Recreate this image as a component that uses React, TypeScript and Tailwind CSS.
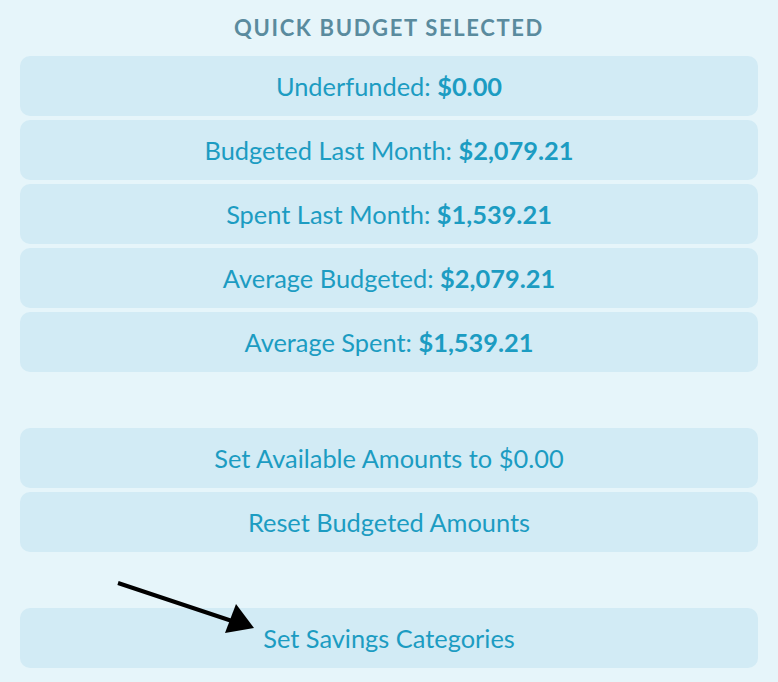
import React from "react";

const stats = [
  { label: "Underfunded:", value: "$0.00" },
  { label: "Budgeted Last Month:", value: "$2,079.21" },
  { label: "Spent Last Month:", value: "$1,539.21" },
  { label: "Average Budgeted:", value: "$2,079.21" },
  { label: "Average Spent:", value: "$1,539.21" },
];

function Row({ children }: { children: React.ReactNode }) {
  return (
    <button
      type="button"
      className="flex h-[60px] w-full items-center justify-center rounded-[10px] bg-[#d2ebf5] text-[25.4px] text-[#1c9cc2]"
    >
      {children}
    </button>
  );
}

export default function App() {
  return (
    <div
      className="relative min-h-[682px] w-full bg-[#e6f5fa] px-5"
      style={{ fontFamily: "Lato, 'Open Sans', sans-serif" }}
    >
      <h2 className="flex h-[55px] items-center justify-center text-[22px] font-bold uppercase tracking-[0.075em] text-[#5a8b9e]">
        Quick Budget Selected
      </h2>
      <div className="mt-px flex flex-col gap-1">
        {stats.map((s) => (
          <Row key={s.label}>
            {s.label}&nbsp;<span className="font-bold">{s.value}</span>
          </Row>
        ))}
      </div>
      <div className="mt-14 flex flex-col gap-1">
        <Row>Set Available Amounts to $0.00</Row>
        <Row>Reset Budgeted Amounts</Row>
      </div>
      <div className="mt-14">
        <Row>Set Savings Categories</Row>
      </div>
      <svg
        className="pointer-events-none absolute left-0 top-0"
        width="778"
        height="682"
        viewBox="0 0 778 682"
      >
        <line x1="118" y1="583" x2="232" y2="621" stroke="#000" strokeWidth="4" />
        <polygon points="254,628 225,633 236,604" fill="#000" />
      </svg>
    </div>
  );
}
